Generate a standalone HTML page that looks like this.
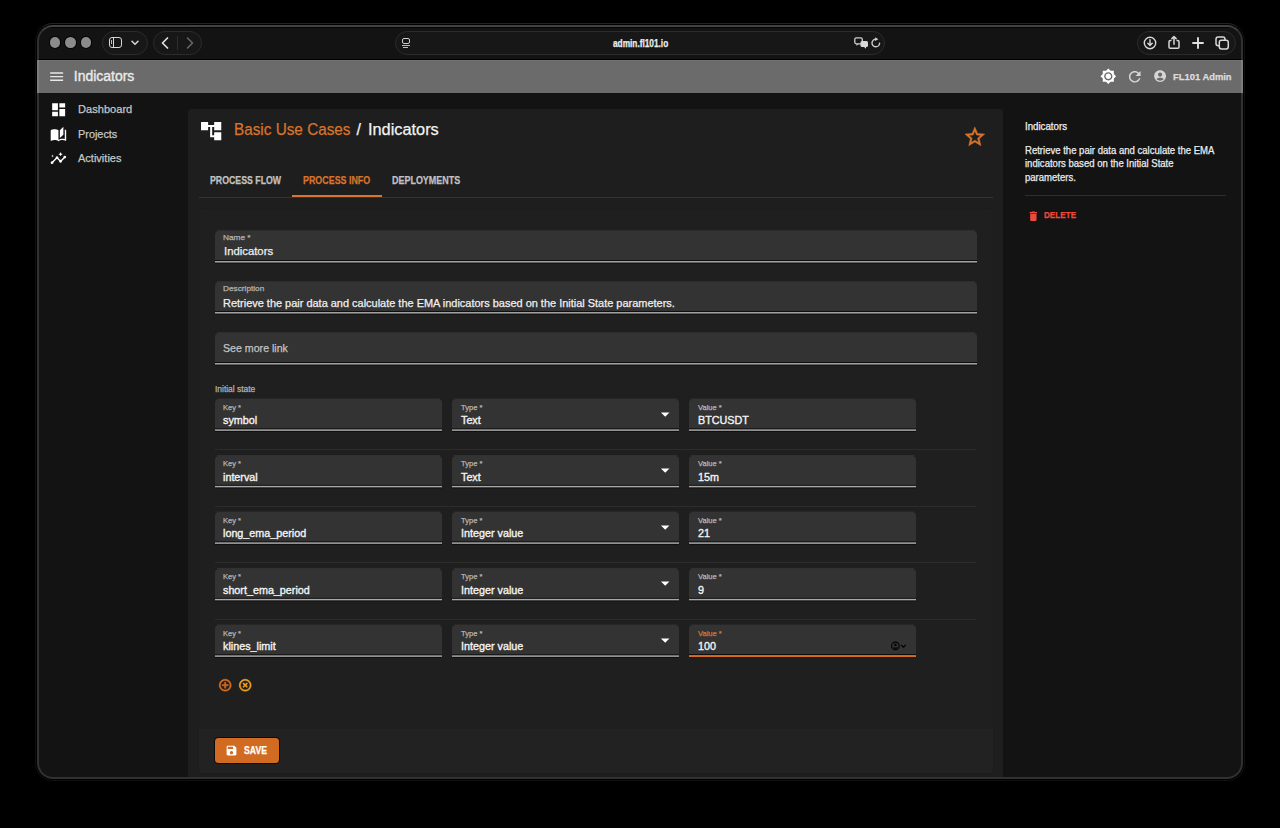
<!DOCTYPE html>
<html><head><meta charset="utf-8">
<style>
*{margin:0;padding:0;box-sizing:border-box}
html,body{width:1280px;height:828px;overflow:hidden;background:#000;font-family:"Liberation Sans",sans-serif;position:relative}
.a{position:absolute}
.t{position:absolute;white-space:nowrap;line-height:1;transform-origin:0 0;-webkit-text-stroke:0.25px currentColor}
svg{position:absolute;display:block}
.pill{position:absolute;border:1px solid #2b2b2b;border-radius:13px;background:#171717}
.light{position:absolute;width:10.5px;height:10.5px;border-radius:50%;background:#8b8b8b;top:37.35px;box-shadow:0 0 0 1px #050505}
.field{position:absolute;background:#323232;border-radius:4px 4px 0 0;border-bottom:2px solid #a6a6a6}
.lbl{color:#b3b3b3}
.val{color:#f0f0f0}
.rowdiv{position:absolute;left:215px;width:761px;height:1px;background:#2c2c2c}
</style></head>
<body>
<div class="a" style="left:35px;top:23px;width:1210px;height:758px;border-radius:18px;border:1px solid #101010;border-top-color:#222"></div>
<div class="a" style="left:37px;top:25px;width:1206px;height:754px;border-radius:16px;background:#131313"></div>
<div class="a" style="left:37px;top:59px;width:1206px;height:1px;background:#000"></div>
<div class="a" style="left:37px;top:27px;width:1206px;height:1px;background:#050505"></div>
<div class="light" style="left:49.65px"></div>
<div class="light" style="left:65.25px"></div>
<div class="light" style="left:80.55px"></div>
<div class="pill" style="left:102px;top:31px;width:46px;height:24px"></div>
<div class="pill" style="left:152.5px;top:31px;width:49.5px;height:24px"></div>
<div class="pill" style="left:395px;top:31px;width:489.5px;height:24px"></div>
<div class="pill" style="left:1137px;top:31px;width:99px;height:24px"></div>
<div class="a" style="left:108.5px;top:37px;width:13.6px;height:11.4px;border:1.6px solid #d8d8d8;border-radius:3px"></div>
<div class="a" style="left:113px;top:38px;width:1.4px;height:9.5px;background:#d8d8d8"></div>
<div class="a" style="left:110.7px;top:40px;width:1.2px;height:4px;background:#bbb"></div>
<svg style="left:130.5px;top:40px" width="8" height="6" viewBox="0 0 8 6"><path d="M1 1.3 L4 4.3 L7 1.3" stroke="#d8d8d8" stroke-width="1.5" fill="none" stroke-linecap="round" stroke-linejoin="round"/></svg>
<svg style="left:160px;top:37px" width="10" height="12" viewBox="0 0 10 12"><path d="M7.5 1 L2.5 6 L7.5 11" stroke="#e0e0e0" stroke-width="1.7" fill="none" stroke-linecap="round" stroke-linejoin="round"/></svg>
<div class="a" style="left:176.8px;top:36px;width:1px;height:14px;background:#2e2e2e"></div>
<svg style="left:184.5px;top:37px" width="10" height="12" viewBox="0 0 10 12"><path d="M2.5 1 L7.5 6 L2.5 11" stroke="#6a6a6a" stroke-width="1.5" fill="none" stroke-linecap="round" stroke-linejoin="round"/></svg>
<div class="a" style="left:401.5px;top:37.5px;width:8.5px;height:6.5px;border:1.5px solid #cfcfcf;border-radius:2px"></div>
<div class="a" style="left:401.5px;top:45px;width:8.5px;height:1.3px;background:#bdbdbd"></div>
<div class="a" style="left:402.5px;top:47px;width:5px;height:1.2px;background:#bdbdbd"></div>
<div class="t" id="url" style="left:613.00px;top:38.67px;font-size:10.20px;color:#ececec;font-weight:bold;transform:scaleX(0.8130);">admin.fl101.io</div>
<svg style="left:853.5px;top:37px" width="15" height="12" viewBox="0 0 15 12"><rect x="0.8" y="0.8" width="7.5" height="6" rx="1.5" fill="none" stroke="#cfcfcf" stroke-width="1.3"/><path d="M2.5 6.8 L2.5 9 L4.5 6.8Z" fill="#cfcfcf"/><rect x="6.5" y="4" width="7.5" height="6" rx="1.5" fill="#d8d8d8"/><path d="M12 10 L12 11.8 L10 10Z" fill="#d8d8d8"/></svg>
<svg style="left:869.5px;top:37px" width="12" height="12" viewBox="0 0 12 12"><path d="M9.6 6.2 A3.8 3.8 0 1 1 6 2.2" stroke="#d0d0d0" stroke-width="1.4" fill="none" stroke-linecap="round"/><path d="M5.2 0.3 L8.3 2.2 L5.2 4.1Z" fill="#d0d0d0"/></svg>
<svg style="left:1142.5px;top:36px" width="14" height="14" viewBox="0 0 14 14"><circle cx="7" cy="7" r="5.7" stroke="#d8d8d8" stroke-width="1.4" fill="none"/><path d="M7 3.8 V9.3 M4.8 7.2 L7 9.4 L9.2 7.2" stroke="#d8d8d8" stroke-width="1.4" fill="none" stroke-linecap="round" stroke-linejoin="round"/></svg>
<svg style="left:1166.5px;top:34.5px" width="14" height="15" viewBox="0 0 14 15"><path d="M4.5 5.6 H3.3 Q2 5.6 2 6.9 V11.9 Q2 13.2 3.3 13.2 H10.7 Q12 13.2 12 11.9 V6.9 Q12 5.6 10.7 5.6 H9.5" stroke="#d8d8d8" stroke-width="1.5" fill="none"/><path d="M7 9.2 V1.6 M4.9 3.6 L7 1.5 L9.1 3.6" stroke="#d8d8d8" stroke-width="1.5" fill="none" stroke-linecap="round" stroke-linejoin="round"/></svg>
<svg style="left:1192px;top:36.7px" width="12" height="12" viewBox="0 0 12 12"><path d="M6 1 V11 M1 6 H11" stroke="#e0e0e0" stroke-width="1.9" stroke-linecap="round"/></svg>
<svg style="left:1215.3px;top:36.2px" width="15" height="14" viewBox="0 0 15 14"><rect x="1" y="1" width="9" height="8.8" rx="2.2" fill="none" stroke="#d8d8d8" stroke-width="1.5"/><rect x="4.3" y="4.2" width="9" height="8.8" rx="2.2" fill="#171717" stroke="#d8d8d8" stroke-width="1.5"/></svg>
<div class="a" style="left:37px;top:60px;width:1206px;height:33px;background:#6b6b6b;border-top:1px solid #717171"></div>
<svg style="left:47.80px;top:68.00px" width="17.30" height="17.30" viewBox="0 0 24 24"><path fill="#e8e8e8" d="M3 18h18v-2H3v2zm0-5h18v-2H3v2zm0-7v2h18V6H3z"/></svg>
<div class="t" id="title" style="left:73.75px;top:70.38px;font-size:13.97px;color:#ebebeb;-webkit-text-stroke:0.35px #ebebeb;">Indicators</div>
<svg style="left:1099.70px;top:68.20px" width="16.60" height="16.60" viewBox="0 0 24 24"><path fill="#ffffff" d="M20 8.69V4h-4.69L12 .69 8.69 4H4v4.69L.69 12 4 15.31V20h4.69L12 23.31 15.31 20H20v-4.69L23.31 12 20 8.69zM12 18c-3.31 0-6-2.69-6-6s2.69-6 6-6 6 2.69 6 6-2.69 6-6 6zm0-10c-2.21 0-4 1.79-4 4s1.79 4 4 4 4-1.79 4-4-1.79-4-4-4z"/></svg>
<svg style="left:1125.90px;top:68.00px" width="17.50" height="17.50" viewBox="0 0 24 24"><path fill="#d6d6d6" d="M17.65 6.35C16.2 4.9 14.21 4 12 4c-4.42 0-7.99 3.58-7.99 8s3.57 8 7.99 8c3.73 0 6.84-2.55 7.73-6h-2.08c-.82 2.33-3.04 4-5.65 4-3.31 0-6-2.69-6-6s2.69-6 6-6c1.66 0 3.14.69 4.22 1.78L13 11h7V4l-2.35 2.35z"/></svg>
<svg style="left:1152.90px;top:69.40px" width="14.20" height="14.20" viewBox="0 0 24 24"><path fill="#d6d6d6" d="M12 2C6.48 2 2 6.48 2 12s4.48 10 10 10 10-4.48 10-10S17.52 2 12 2zm0 4c1.93 0 3.5 1.57 3.5 3.5S13.93 13 12 13s-3.5-1.57-3.5-3.5S10.07 6 12 6zm0 14c-2.03 0-4.43-.82-6.14-2.88C7.55 15.8 9.68 15 12 15s4.45.8 6.14 2.12C16.43 19.18 14.03 20 12 20z"/></svg>
<div class="t" id="admin" style="left:1172.75px;top:71.84px;font-size:9.64px;color:#dcdcdc;font-weight:bold;transform:scaleX(0.9750);">FL101 Admin</div>
<svg style="left:49.80px;top:101.30px" width="17.30" height="17.30" viewBox="0 0 24 24"><path fill="#ffffff" d="M3 13h8V3H3v10zm0 8h8v-6H3v6zm10 0h8V11h-8v10zm0-18v6h8V3h-8z"/></svg>
<svg style="left:49.90px;top:125.60px" width="16.90" height="16.90" viewBox="0 0 24 24"><path fill="#ffffff" d="M19 1l-5 5v11l5-4.5V1zM1 6v14.65c0 .25.25.5.5.5.1 0 .15-.05.25-.05C3.1 20.45 5.05 20 6.5 20c1.95 0 4.05.4 5.5 1.5V6c-1.45-1.1-3.55-1.5-5.5-1.5S2.45 4.9 1 6zm22 13.5V6c-.6-.45-1.25-.75-2-1v13.5c-1.1-.35-2.3-.5-3.5-.5-1.7 0-4.15.65-5.5 1.5v2c1.35-.85 3.8-1.5 5.5-1.5 1.65 0 3.35.3 4.75 1.05.1.05.15.05.25.05.25 0 .5-.25.5-.5v-1.1z"/></svg>
<svg style="left:49.90px;top:149.90px" width="16.90" height="16.90" viewBox="0 0 24 24"><path fill="#ffffff" d="M21 8c-1.45 0-2.26 1.44-1.93 2.51l-3.55 3.56c-.3-.09-.74-.09-1.04 0l-2.55-2.55C12.27 10.45 11.46 9 10 9c-1.45 0-2.27 1.44-1.93 2.52l-4.56 4.55C2.44 15.74 1 16.55 1 18c0 1.1.9 2 2 2 1.45 0 2.26-1.44 1.93-2.51l4.55-4.56c.3.09.74.09 1.04 0l2.55 2.55C12.73 16.55 13.54 18 15 18c1.45 0 2.27-1.44 1.93-2.52l3.56-3.55c1.07.33 2.51-.48 2.51-1.93 0-1.1-.9-2-2-2zM15 9l.94-2.07L18 6l-2.06-.93L15 3l-.92 2.07L12 6l2.08.93zM3.5 11L4 9l2-.5L4 8l-.5-2L3 8l-2 .5L3 9z"/></svg>
<div class="t" id="dash" style="left:77.50px;top:104.11px;font-size:11.38px;color:#c6c6c6;transform:scaleX(0.9750);">Dashboard</div>
<div class="t" id="proj" style="left:77.50px;top:128.54px;font-size:11.17px;color:#c6c6c6;transform:scaleX(0.9750);">Projects</div>
<div class="t" id="act" style="left:77.50px;top:152.92px;font-size:11.31px;color:#c6c6c6;transform:scaleX(0.9750);">Activities</div>
<div class="a" style="left:188px;top:109px;width:815px;height:668px;background:#1e1e1e;border-radius:4px 4px 0 0"></div>
<svg style="left:198.80px;top:119.00px" width="24.30" height="24.30" viewBox="0 0 24 24"><path fill="#ffffff" d="M22 11V3h-7v3H9V3H2v8h7V8h2v10h4v3h7v-8h-7v3h-2V8h2v3z"/></svg>
<div class="t" id="bc1" style="left:233.90px;top:122.12px;font-size:15.92px;color:#d8742b;transform:scaleX(0.9620);">Basic Use Cases</div>
<div class="t" id="bc2" style="left:356.40px;top:122.12px;font-size:15.92px;color:#f2f2f2;">/</div>
<div class="t" id="bc3" style="left:367.60px;top:122.12px;font-size:15.92px;color:#f2f2f2;transform:scaleX(1.0260);">Indicators</div>
<svg style="left:963.10px;top:125.10px" width="23.70" height="23.70" viewBox="0 0 24 24"><path fill="#d8742b" stroke="#d8742b" stroke-width="0.5" d="M22 9.24l-7.19-.62L12 2 9.19 8.63 2 9.24l5.46 4.73L5.82 21 12 17.27 18.18 21l-1.63-7.03L22 9.24zM12 15.4l-3.76 2.27 1-4.28-3.32-2.88 4.38-.38L12 6.1l1.71 4.04 4.38.38-3.32 2.88 1 4.28L12 15.4z"/></svg>
<div class="t" id="tab1" style="left:209.80px;top:174.97px;font-size:10.96px;color:#c2c2c2;font-weight:bold;transform:scaleX(0.8000);">PROCESS FLOW</div>
<div class="t" id="tab2" style="left:302.80px;top:174.97px;font-size:10.96px;color:#d8742b;font-weight:bold;transform:scaleX(0.8120);">PROCESS INFO</div>
<div class="t" id="tab3" style="left:392.10px;top:174.97px;font-size:10.96px;color:#c2c2c2;font-weight:bold;transform:scaleX(0.8180);">DEPLOYMENTS</div>
<div class="a" style="left:199px;top:197px;width:793.5px;height:1px;background:#333333"></div>
<div class="a" style="left:292px;top:194.7px;width:90px;height:2.3px;background:#d8742b"></div>
<div class="a" style="left:199px;top:208.5px;width:793.5px;height:564px;background:#1f1f1f;border-radius:4px;box-shadow:0 0 0 1px #1d1d1d"></div>
<div class="a" style="left:215px;top:231px;width:761.5px;height:29px;background:#333333;border-radius:4px 4px 0 0"></div>
<div class="a" style="left:217px;top:230px;width:757.5px;height:1px;background:#2d2d2d"></div>
<div class="a" style="left:215px;top:260px;width:761.5px;height:1px;background:#0e0e0e"></div>
<div class="a" style="left:215px;top:261px;width:761.5px;height:1px;background:#a0a0a0"></div>
<div class="a" style="left:215px;top:262px;width:761.5px;height:1px;background:#626262"></div>
<div class="a" style="left:215px;top:263px;width:761.5px;height:1px;background:#151515"></div>
<div class="t" id="nlbl" style="left:223.00px;top:234.14px;font-size:8.10px;color:#b3b3b3;transform:scaleX(1.0200);">Name *</div>
<div class="t" id="nval" style="left:223.50px;top:245.81px;font-size:11.45px;color:#f0f0f0;transform:scaleX(0.9900);">Indicators</div>
<div class="a" style="left:215px;top:282px;width:761.5px;height:29px;background:#333333;border-radius:4px 4px 0 0"></div>
<div class="a" style="left:217px;top:281px;width:757.5px;height:1px;background:#2d2d2d"></div>
<div class="a" style="left:215px;top:311px;width:761.5px;height:1px;background:#0e0e0e"></div>
<div class="a" style="left:215px;top:312px;width:761.5px;height:1px;background:#a0a0a0"></div>
<div class="a" style="left:215px;top:313px;width:761.5px;height:1px;background:#626262"></div>
<div class="a" style="left:215px;top:314px;width:761.5px;height:1px;background:#151515"></div>
<div class="t" id="dlbl" style="left:223.00px;top:285.14px;font-size:8.10px;color:#b3b3b3;transform:scaleX(1.0200);">Description</div>
<div class="t" id="dval" style="left:223.40px;top:297.70px;font-size:10.75px;color:#f0f0f0;transform:scaleX(1.0190);">Retrieve the pair data and calculate the EMA indicators based on the Initial State parameters.</div>
<div class="a" style="left:215px;top:333px;width:761.5px;height:29px;background:#333333;border-radius:4px 4px 0 0"></div>
<div class="a" style="left:217px;top:332px;width:757.5px;height:1px;background:#2d2d2d"></div>
<div class="a" style="left:215px;top:362px;width:761.5px;height:1px;background:#0e0e0e"></div>
<div class="a" style="left:215px;top:363px;width:761.5px;height:1px;background:#a0a0a0"></div>
<div class="a" style="left:215px;top:364px;width:761.5px;height:1px;background:#626262"></div>
<div class="a" style="left:215px;top:365px;width:761.5px;height:1px;background:#151515"></div>
<div class="t" id="see" style="left:223.25px;top:342.72px;font-size:11.31px;color:#c4c4c4;transform:scaleX(0.9400);">See more link</div>
<div class="t" id="init" style="left:215.10px;top:384.69px;font-size:8.52px;color:#b3b3b3;transform:scaleX(0.9900);">Initial state</div>
<div class="a" style="left:215px;top:399px;width:226.5px;height:29px;background:#333333;border-radius:4px 4px 0 0"></div>
<div class="a" style="left:217px;top:398px;width:222.5px;height:1px;background:#272727"></div>
<div class="a" style="left:215px;top:428px;width:226.5px;height:1px;background:#1a1a1a"></div>
<div class="a" style="left:215px;top:429px;width:226.5px;height:1px;background:#717171"></div>
<div class="a" style="left:215px;top:430px;width:226.5px;height:1px;background:#919191"></div>
<div class="a" style="left:215px;top:431px;width:226.5px;height:1px;background:#0f0f0f"></div>
<div class="a" style="left:452px;top:399px;width:227px;height:29px;background:#333333;border-radius:4px 4px 0 0"></div>
<div class="a" style="left:454px;top:398px;width:223px;height:1px;background:#272727"></div>
<div class="a" style="left:452px;top:428px;width:227px;height:1px;background:#1a1a1a"></div>
<div class="a" style="left:452px;top:429px;width:227px;height:1px;background:#717171"></div>
<div class="a" style="left:452px;top:430px;width:227px;height:1px;background:#919191"></div>
<div class="a" style="left:452px;top:431px;width:227px;height:1px;background:#0f0f0f"></div>
<div class="a" style="left:689px;top:399px;width:227px;height:29px;background:#333333;border-radius:4px 4px 0 0"></div>
<div class="a" style="left:691px;top:398px;width:223px;height:1px;background:#272727"></div>
<div class="a" style="left:689px;top:428px;width:227px;height:1px;background:#1a1a1a"></div>
<div class="a" style="left:689px;top:429px;width:227px;height:1px;background:#717171"></div>
<div class="a" style="left:689px;top:430px;width:227px;height:1px;background:#919191"></div>
<div class="a" style="left:689px;top:431px;width:227px;height:1px;background:#0f0f0f"></div>
<div class="t" id="k0l" style="left:223.00px;top:403.53px;font-size:7.40px;color:#b3b3b3;transform:scaleX(1.0200);">Key *</div>
<div class="t" id="k0v" style="left:223.25px;top:415.38px;font-size:10.89px;color:#f4f4f4;transform:scaleX(0.9900);-webkit-text-stroke:0.35px #f4f4f4;">symbol</div>
<div class="t" id="t0l" style="left:460.80px;top:403.53px;font-size:7.40px;color:#b3b3b3;transform:scaleX(1.0200);">Type *</div>
<div class="t" id="t0v" style="left:460.80px;top:415.38px;font-size:10.89px;color:#f4f4f4;transform:scaleX(0.9900);-webkit-text-stroke:0.35px #f4f4f4;">Text</div>
<div class="t" id="v0l" style="left:697.50px;top:403.53px;font-size:7.40px;color:#b3b3b3;transform:scaleX(1.0200);">Value *</div>
<div class="t" id="v0v" style="left:697.50px;top:415.38px;font-size:10.89px;color:#f4f4f4;transform:scaleX(0.9900);-webkit-text-stroke:0.35px #f4f4f4;">BTCUSDT</div>
<svg style="left:655.30px;top:403.70px" width="20.40" height="20.40" viewBox="0 0 24 24"><path fill="#ffffff" d="M7 10l5 5 5-5z"/></svg>
<div class="rowdiv" style="top:449.2px"></div>
<div class="a" style="left:215px;top:456px;width:226.5px;height:28px;background:#333333;border-radius:4px 4px 0 0"></div>
<div class="a" style="left:217px;top:455px;width:222.5px;height:1px;background:#313131"></div>
<div class="a" style="left:215px;top:484px;width:226.5px;height:1px;background:#2d2d2d"></div>
<div class="a" style="left:215px;top:485px;width:226.5px;height:1px;background:#232323"></div>
<div class="a" style="left:215px;top:486px;width:226.5px;height:1px;background:#a8a8a8"></div>
<div class="a" style="left:215px;top:487px;width:226.5px;height:1px;background:#434343"></div>
<div class="a" style="left:215px;top:488px;width:226.5px;height:1px;background:#181818"></div>
<div class="a" style="left:452px;top:456px;width:227px;height:28px;background:#333333;border-radius:4px 4px 0 0"></div>
<div class="a" style="left:454px;top:455px;width:223px;height:1px;background:#313131"></div>
<div class="a" style="left:452px;top:484px;width:227px;height:1px;background:#2d2d2d"></div>
<div class="a" style="left:452px;top:485px;width:227px;height:1px;background:#232323"></div>
<div class="a" style="left:452px;top:486px;width:227px;height:1px;background:#a8a8a8"></div>
<div class="a" style="left:452px;top:487px;width:227px;height:1px;background:#434343"></div>
<div class="a" style="left:452px;top:488px;width:227px;height:1px;background:#181818"></div>
<div class="a" style="left:689px;top:456px;width:227px;height:28px;background:#333333;border-radius:4px 4px 0 0"></div>
<div class="a" style="left:691px;top:455px;width:223px;height:1px;background:#313131"></div>
<div class="a" style="left:689px;top:484px;width:227px;height:1px;background:#2d2d2d"></div>
<div class="a" style="left:689px;top:485px;width:227px;height:1px;background:#232323"></div>
<div class="a" style="left:689px;top:486px;width:227px;height:1px;background:#a8a8a8"></div>
<div class="a" style="left:689px;top:487px;width:227px;height:1px;background:#434343"></div>
<div class="a" style="left:689px;top:488px;width:227px;height:1px;background:#181818"></div>
<div class="t" id="k1l" style="left:223.00px;top:460.03px;font-size:7.40px;color:#b3b3b3;transform:scaleX(1.0200);">Key *</div>
<div class="t" id="k1v" style="left:223.25px;top:471.88px;font-size:10.89px;color:#f4f4f4;transform:scaleX(0.9900);-webkit-text-stroke:0.35px #f4f4f4;">interval</div>
<div class="t" id="t1l" style="left:460.80px;top:460.03px;font-size:7.40px;color:#b3b3b3;transform:scaleX(1.0200);">Type *</div>
<div class="t" id="t1v" style="left:460.80px;top:471.88px;font-size:10.89px;color:#f4f4f4;transform:scaleX(0.9900);-webkit-text-stroke:0.35px #f4f4f4;">Text</div>
<div class="t" id="v1l" style="left:697.50px;top:460.03px;font-size:7.40px;color:#b3b3b3;transform:scaleX(1.0200);">Value *</div>
<div class="t" id="v1v" style="left:697.50px;top:471.88px;font-size:10.89px;color:#f4f4f4;transform:scaleX(0.9900);-webkit-text-stroke:0.35px #f4f4f4;">15m</div>
<svg style="left:655.30px;top:460.20px" width="20.40" height="20.40" viewBox="0 0 24 24"><path fill="#ffffff" d="M7 10l5 5 5-5z"/></svg>
<div class="rowdiv" style="top:505.7px"></div>
<div class="a" style="left:215px;top:512px;width:226.5px;height:29px;background:#333333;border-radius:4px 4px 0 0"></div>
<div class="a" style="left:217px;top:511px;width:222.5px;height:1px;background:#272727"></div>
<div class="a" style="left:215px;top:541px;width:226.5px;height:1px;background:#1a1a1a"></div>
<div class="a" style="left:215px;top:542px;width:226.5px;height:1px;background:#717171"></div>
<div class="a" style="left:215px;top:543px;width:226.5px;height:1px;background:#919191"></div>
<div class="a" style="left:215px;top:544px;width:226.5px;height:1px;background:#0f0f0f"></div>
<div class="a" style="left:452px;top:512px;width:227px;height:29px;background:#333333;border-radius:4px 4px 0 0"></div>
<div class="a" style="left:454px;top:511px;width:223px;height:1px;background:#272727"></div>
<div class="a" style="left:452px;top:541px;width:227px;height:1px;background:#1a1a1a"></div>
<div class="a" style="left:452px;top:542px;width:227px;height:1px;background:#717171"></div>
<div class="a" style="left:452px;top:543px;width:227px;height:1px;background:#919191"></div>
<div class="a" style="left:452px;top:544px;width:227px;height:1px;background:#0f0f0f"></div>
<div class="a" style="left:689px;top:512px;width:227px;height:29px;background:#333333;border-radius:4px 4px 0 0"></div>
<div class="a" style="left:691px;top:511px;width:223px;height:1px;background:#272727"></div>
<div class="a" style="left:689px;top:541px;width:227px;height:1px;background:#1a1a1a"></div>
<div class="a" style="left:689px;top:542px;width:227px;height:1px;background:#717171"></div>
<div class="a" style="left:689px;top:543px;width:227px;height:1px;background:#919191"></div>
<div class="a" style="left:689px;top:544px;width:227px;height:1px;background:#0f0f0f"></div>
<div class="t" id="k2l" style="left:223.00px;top:516.53px;font-size:7.40px;color:#b3b3b3;transform:scaleX(1.0200);">Key *</div>
<div class="t" id="k2v" style="left:223.25px;top:528.38px;font-size:10.89px;color:#f4f4f4;transform:scaleX(0.9900);-webkit-text-stroke:0.35px #f4f4f4;">long_ema_period</div>
<div class="t" id="t2l" style="left:460.80px;top:516.53px;font-size:7.40px;color:#b3b3b3;transform:scaleX(1.0200);">Type *</div>
<div class="t" id="t2v" style="left:460.80px;top:528.38px;font-size:10.89px;color:#f4f4f4;transform:scaleX(0.9900);-webkit-text-stroke:0.35px #f4f4f4;">Integer value</div>
<div class="t" id="v2l" style="left:697.50px;top:516.53px;font-size:7.40px;color:#b3b3b3;transform:scaleX(1.0200);">Value *</div>
<div class="t" id="v2v" style="left:697.50px;top:528.38px;font-size:10.89px;color:#f4f4f4;transform:scaleX(0.9900);-webkit-text-stroke:0.35px #f4f4f4;">21</div>
<svg style="left:655.30px;top:516.70px" width="20.40" height="20.40" viewBox="0 0 24 24"><path fill="#ffffff" d="M7 10l5 5 5-5z"/></svg>
<div class="rowdiv" style="top:562.2px"></div>
<div class="a" style="left:215px;top:569px;width:226.5px;height:28px;background:#333333;border-radius:4px 4px 0 0"></div>
<div class="a" style="left:217px;top:568px;width:222.5px;height:1px;background:#313131"></div>
<div class="a" style="left:215px;top:597px;width:226.5px;height:1px;background:#2d2d2d"></div>
<div class="a" style="left:215px;top:598px;width:226.5px;height:1px;background:#232323"></div>
<div class="a" style="left:215px;top:599px;width:226.5px;height:1px;background:#a8a8a8"></div>
<div class="a" style="left:215px;top:600px;width:226.5px;height:1px;background:#434343"></div>
<div class="a" style="left:215px;top:601px;width:226.5px;height:1px;background:#181818"></div>
<div class="a" style="left:452px;top:569px;width:227px;height:28px;background:#333333;border-radius:4px 4px 0 0"></div>
<div class="a" style="left:454px;top:568px;width:223px;height:1px;background:#313131"></div>
<div class="a" style="left:452px;top:597px;width:227px;height:1px;background:#2d2d2d"></div>
<div class="a" style="left:452px;top:598px;width:227px;height:1px;background:#232323"></div>
<div class="a" style="left:452px;top:599px;width:227px;height:1px;background:#a8a8a8"></div>
<div class="a" style="left:452px;top:600px;width:227px;height:1px;background:#434343"></div>
<div class="a" style="left:452px;top:601px;width:227px;height:1px;background:#181818"></div>
<div class="a" style="left:689px;top:569px;width:227px;height:28px;background:#333333;border-radius:4px 4px 0 0"></div>
<div class="a" style="left:691px;top:568px;width:223px;height:1px;background:#313131"></div>
<div class="a" style="left:689px;top:597px;width:227px;height:1px;background:#2d2d2d"></div>
<div class="a" style="left:689px;top:598px;width:227px;height:1px;background:#232323"></div>
<div class="a" style="left:689px;top:599px;width:227px;height:1px;background:#a8a8a8"></div>
<div class="a" style="left:689px;top:600px;width:227px;height:1px;background:#434343"></div>
<div class="a" style="left:689px;top:601px;width:227px;height:1px;background:#181818"></div>
<div class="t" id="k3l" style="left:223.00px;top:573.03px;font-size:7.40px;color:#b3b3b3;transform:scaleX(1.0200);">Key *</div>
<div class="t" id="k3v" style="left:223.25px;top:584.88px;font-size:10.89px;color:#f4f4f4;transform:scaleX(0.9900);-webkit-text-stroke:0.35px #f4f4f4;">short_ema_period</div>
<div class="t" id="t3l" style="left:460.80px;top:573.03px;font-size:7.40px;color:#b3b3b3;transform:scaleX(1.0200);">Type *</div>
<div class="t" id="t3v" style="left:460.80px;top:584.88px;font-size:10.89px;color:#f4f4f4;transform:scaleX(0.9900);-webkit-text-stroke:0.35px #f4f4f4;">Integer value</div>
<div class="t" id="v3l" style="left:697.50px;top:573.03px;font-size:7.40px;color:#b3b3b3;transform:scaleX(1.0200);">Value *</div>
<div class="t" id="v3v" style="left:697.50px;top:584.88px;font-size:10.89px;color:#f4f4f4;transform:scaleX(0.9900);-webkit-text-stroke:0.35px #f4f4f4;">9</div>
<svg style="left:655.30px;top:573.20px" width="20.40" height="20.40" viewBox="0 0 24 24"><path fill="#ffffff" d="M7 10l5 5 5-5z"/></svg>
<div class="rowdiv" style="top:618.7px"></div>
<div class="a" style="left:215px;top:625px;width:226.5px;height:29px;background:#333333;border-radius:4px 4px 0 0"></div>
<div class="a" style="left:217px;top:624px;width:222.5px;height:1px;background:#272727"></div>
<div class="a" style="left:215px;top:654px;width:226.5px;height:1px;background:#1a1a1a"></div>
<div class="a" style="left:215px;top:655px;width:226.5px;height:1px;background:#717171"></div>
<div class="a" style="left:215px;top:656px;width:226.5px;height:1px;background:#919191"></div>
<div class="a" style="left:215px;top:657px;width:226.5px;height:1px;background:#0f0f0f"></div>
<div class="a" style="left:452px;top:625px;width:227px;height:29px;background:#333333;border-radius:4px 4px 0 0"></div>
<div class="a" style="left:454px;top:624px;width:223px;height:1px;background:#272727"></div>
<div class="a" style="left:452px;top:654px;width:227px;height:1px;background:#1a1a1a"></div>
<div class="a" style="left:452px;top:655px;width:227px;height:1px;background:#717171"></div>
<div class="a" style="left:452px;top:656px;width:227px;height:1px;background:#919191"></div>
<div class="a" style="left:452px;top:657px;width:227px;height:1px;background:#0f0f0f"></div>
<div class="a" style="left:689px;top:625px;width:227px;height:29px;background:#333333;border-radius:4px 4px 0 0"></div>
<div class="a" style="left:691px;top:624px;width:223px;height:1px;background:#272727"></div>
<div class="a" style="left:689px;top:654px;width:227px;height:1px;background:#0e0e0e"></div>
<div class="a" style="left:689px;top:655px;width:227px;height:1px;background:#cc6721"></div>
<div class="a" style="left:689px;top:656px;width:227px;height:1px;background:#d66c22"></div>
<div class="a" style="left:689px;top:657px;width:227px;height:1px;background:#2a1a0f"></div>
<div class="a" style="left:689px;top:658px;width:227px;height:1px;background:#1c1c1c"></div>
<div class="t" id="k4l" style="left:223.00px;top:629.53px;font-size:7.40px;color:#b3b3b3;transform:scaleX(1.0200);">Key *</div>
<div class="t" id="k4v" style="left:223.25px;top:641.38px;font-size:10.89px;color:#f4f4f4;transform:scaleX(0.9900);-webkit-text-stroke:0.35px #f4f4f4;">klines_limit</div>
<div class="t" id="t4l" style="left:460.80px;top:629.53px;font-size:7.40px;color:#b3b3b3;transform:scaleX(1.0200);">Type *</div>
<div class="t" id="t4v" style="left:460.80px;top:641.38px;font-size:10.89px;color:#f4f4f4;transform:scaleX(0.9900);-webkit-text-stroke:0.35px #f4f4f4;">Integer value</div>
<div class="t" id="v4l" style="left:697.50px;top:629.53px;font-size:7.40px;color:#d8742b;transform:scaleX(1.0200);">Value *</div>
<div class="t" id="v4v" style="left:697.50px;top:641.38px;font-size:10.89px;color:#f4f4f4;transform:scaleX(0.9900);-webkit-text-stroke:0.35px #f4f4f4;">100</div>
<svg style="left:655.30px;top:629.70px" width="20.40" height="20.40" viewBox="0 0 24 24"><path fill="#ffffff" d="M7 10l5 5 5-5z"/></svg>
<svg style="left:889px;top:640px" width="20" height="12" viewBox="0 0 20 12"><circle cx="6.4" cy="5.9" r="3.8" stroke="#000" stroke-width="1.1" fill="none"/><circle cx="6.4" cy="4.9" r="1.2" fill="#000"/><path d="M3.6 7.6 Q6.4 10.2 9.2 7.6 Z" fill="#000"/><path d="M12.2 5 L14.5 7.2 L16.8 5" stroke="#000" stroke-width="1.1" fill="none"/></svg>
<svg style="left:217.80px;top:678.10px" width="14.40" height="14.40" viewBox="0 0 24 24"><path fill="#d9701e" stroke="#d9701e" stroke-width="0.9" d="M13 7h-2v4H7v2h4v4h2v-4h4v-2h-4V7zm-1-5C6.48 2 2 6.48 2 12s4.48 10 10 10 10-4.48 10-10S17.52 2 12 2zm0 18c-4.41 0-8-3.59-8-8s3.59-8 8-8 8 3.59 8 8-3.59 8-8 8z"/></svg>
<svg style="left:238.10px;top:678.10px" width="14.40" height="14.40" viewBox="0 0 24 24"><path fill="#f2a125" stroke="#f2a125" stroke-width="0.9" d="M14.59 8L12 10.59 9.41 8 8 9.41 10.59 12 8 14.59 9.41 16 12 13.41 14.59 16 16 14.59 13.41 12 16 9.41 14.59 8zM12 2C6.47 2 2 6.47 2 12s4.47 10 10 10 10-4.47 10-10S17.53 2 12 2zm0 18c-4.41 0-8-3.59-8-8s3.59-8 8-8 8 3.59 8 8-3.59 8-8 8z"/></svg>
<div class="a" style="left:199px;top:729px;width:793.5px;height:43.5px;background:#222222;border-radius:0 0 4px 4px"></div>
<div class="a" style="left:215px;top:738px;width:64px;height:25px;background:#d26b22;border-radius:3.5px;box-shadow:0 0 0 1px #0c0c0c"></div>
<svg style="left:225.30px;top:744.40px" width="13.00" height="13.00" viewBox="0 0 24 24"><path fill="#ffffff" d="M17 3H5c-1.11 0-2 .9-2 2v14c0 1.1.89 2 2 2h14c1.1 0 2-.9 2-2V7l-4-4zm-5 16c-1.66 0-3-1.34-3-3s1.34-3 3-3 3 1.34 3 3-1.34 3-3 3zm3-10H5V5h10v4z"/></svg>
<div class="t" id="save" style="left:243.50px;top:745.95px;font-size:9.99px;color:#ffffff;font-weight:bold;transform:scaleX(0.8670);">SAVE</div>
<div class="t" id="rtitle" style="left:1024.50px;top:122.09px;font-size:10.06px;color:#f0f0f0;transform:scaleX(0.9640);">Indicators</div>
<div class="t" id="rd0" style="left:1024.50px;top:145.99px;font-size:10.06px;color:#ececec;transform:scaleX(0.9500);">Retrieve the pair data and calculate the EMA</div>
<div class="t" id="rd1" style="left:1024.50px;top:159.34px;font-size:10.06px;color:#ececec;transform:scaleX(0.9500);">indicators based on the Initial State</div>
<div class="t" id="rd2" style="left:1024.50px;top:172.69px;font-size:10.06px;color:#ececec;transform:scaleX(0.9500);">parameters.</div>
<div class="a" style="left:1024.5px;top:195px;width:201.5px;height:1px;background:#2e2e2e"></div>
<svg style="left:1026.60px;top:210.00px" width="12.70" height="12.70" viewBox="0 0 24 24"><path fill="#ec4a3c" d="M6 19c0 1.1.9 2 2 2h8c1.1 0 2-.9 2-2V7H6v12zM19 4h-3.5l-1-1h-5l-1 1H5v2h14V4z"/></svg>
<div class="t" id="del" style="left:1043.90px;top:210.14px;font-size:9.64px;color:#ec4a3c;font-weight:bold;transform:scaleX(0.8450);">DELETE</div>
<div class="a" style="left:37px;top:25px;width:1206px;height:754px;border-radius:16px;border:2px solid rgba(255,255,255,0.13);border-top-color:rgba(255,255,255,0.2)"></div>
</body></html>
